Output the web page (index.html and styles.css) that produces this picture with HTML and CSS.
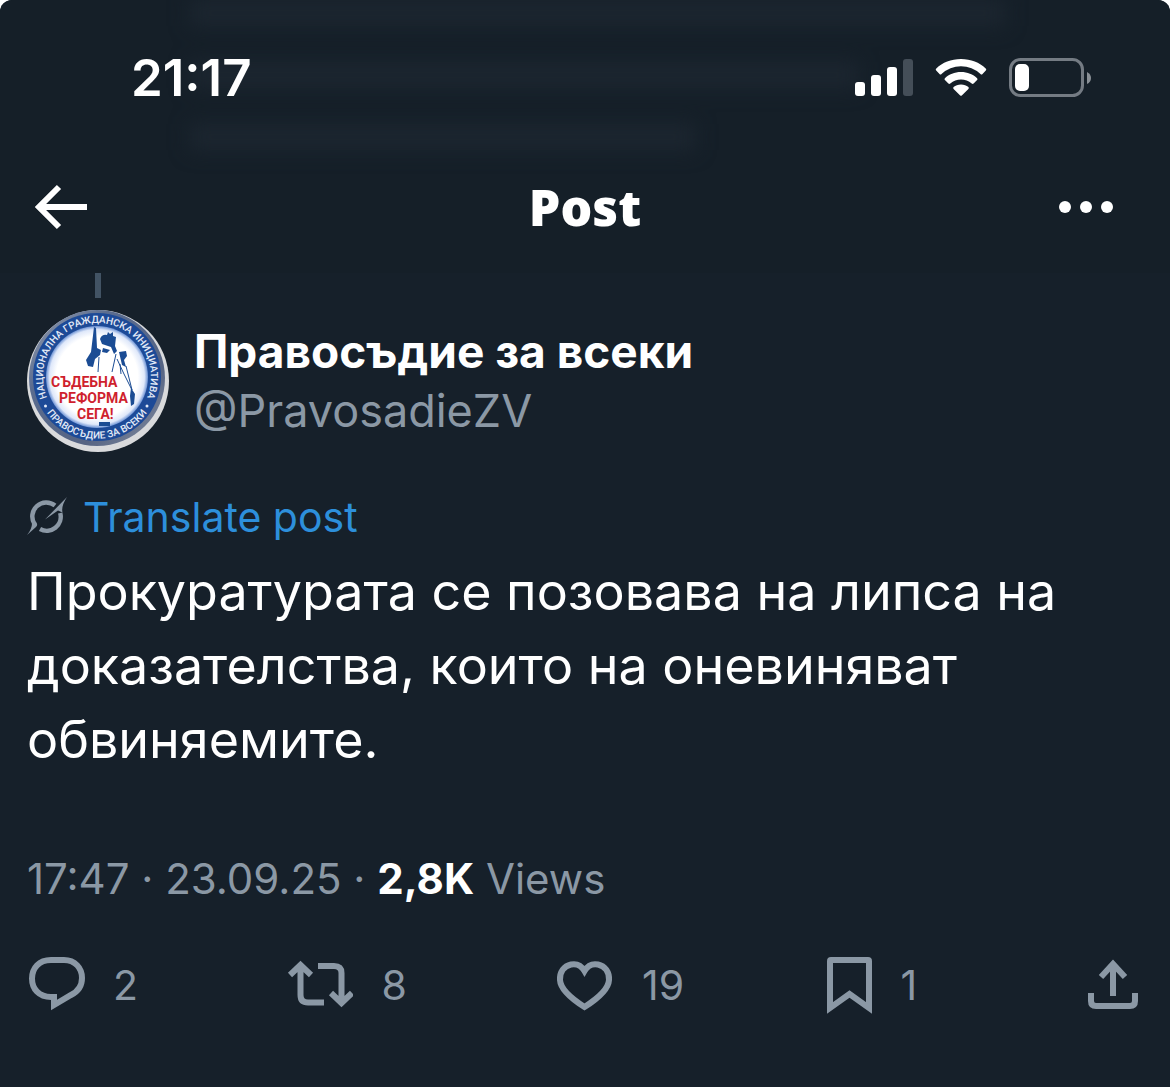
FILE: index.html
```
<!DOCTYPE html>
<html lang="bg">
<head>
    <meta charset="UTF-8">
    <meta name="viewport" content="width=device-width, initial-scale=1.0">
    <title>Post</title>
    <link rel="stylesheet" href="styles.css">
</head>
<body>
    <div class="screen">
        <header class="header">
            <!-- post scrolled under the translucent header -->
            <div class="blurred" aria-hidden="true">
                <div class="blurred-line"></div>
                <div class="blurred-line medium"></div>
                <div class="blurred-line short"></div>
            </div>

            <div class="status-bar">
                <time class="clock">21:17</time>
                <div class="status-icons">
                    <svg width="58" height="38" viewBox="0 0 58 38" fill="#fff" role="img" aria-label="Signal">
                        <rect x="0" y="23" width="10" height="14" rx="3"/>
                        <rect x="16" y="16" width="10" height="21" rx="3"/>
                        <rect x="32" y="8" width="10" height="29" rx="3"/>
                        <rect x="48" y="0" width="10" height="37" rx="3" fill="#444e58"/>
                    </svg>
                    <svg width="52" height="38" viewBox="0 0 52 38" fill="#fff" role="img" aria-label="Wi-Fi">
                        <path d="M26 0C16 0 7.500 3.500 1.300 9.500Q.3 10.500 1.200 11.500L4.500 15Q5.500 16 6.500 15A28.500 28.500 0 0 1 45.500 15Q46.500 16 47.500 15L50.800 11.500Q51.700 10.500 50.700 9.500C44.500 3.500 36 0 26 0Z"/>
                        <path d="M26 13C19.500 13 14 15.300 9.900 19.200Q9 20.200 9.900 21.100L13.400 24.500Q14.300 25.300 15.300 24.500A16 16 0 0 1 36.700 24.500Q37.700 25.300 38.600 24.500L42.100 21.100Q43 20.200 42.100 19.200C38 15.300 32.500 13 26 13Z"/>
                        <path d="M26 25.500C23 25.500 20.500 26.500 18.600 28.100Q17.700 29 18.600 29.900L25.200 36.500Q26 37.200 26.800 36.500L33.400 29.900Q34.300 29 33.400 28.100C31.500 26.500 29 25.500 26 25.500Z"/>
                    </svg>
                    <svg width="82" height="40" viewBox="0 0 82 40" role="img" aria-label="Battery">
                        <rect x="1.500" y="1.500" width="72" height="36" rx="10" fill="none" stroke="#747b83" stroke-width="3"/>
                        <rect x="6" y="6" width="14" height="27" rx="5" fill="#fff"/>
                        <path d="M78 14Q82 16 82 20T78 26Z" fill="#8a9096"/>
                    </svg>
                </div>
            </div>

            <nav class="nav">
                <button class="icon-button" type="button" aria-label="Back">
                    <svg width="54" height="46" viewBox="0 0 54 46" fill="none" stroke="#fff" stroke-width="6">
                        <path d="M25 3L5 23L25 43M5 23H53"/>
                    </svg>
                </button>
                <h1 class="title">Post</h1>
                <button class="icon-button more" type="button" aria-label="More">
                    <svg width="54" height="12" viewBox="0 0 54 12" fill="#fff">
                        <circle cx="6" cy="6" r="6"/>
                        <circle cx="27" cy="6" r="6"/>
                        <circle cx="48" cy="6" r="6"/>
                    </svg>
                </button>
            </nav>
        </header>

        <main class="post">
            <div class="thread-line"></div>

            <div class="author">
                <svg class="avatar" viewBox="0 0 142 142" role="img" aria-label="Правосъдие за всеки">
                    <defs>
                        <linearGradient id="rim" x1="0" y1="0" x2="1" y2="1">
                            <stop offset="0" stop-color="#9aa3b3"/>
                            <stop offset="0.3" stop-color="#5a6c8f"/>
                            <stop offset="0.7" stop-color="#566483"/>
                            <stop offset="1" stop-color="#8791a3"/>
                        </linearGradient>
                        <radialGradient id="face">
                            <stop offset="0.8" stop-color="#fff"/>
                            <stop offset="0.93" stop-color="#dfe8fa"/>
                            <stop offset="1" stop-color="#6c92d4"/>
                        </radialGradient>
                        <path id="ringTop" d="M19.500 86A54 54 0 1 1 120.500 86"/>
                        <path id="ringBottom" d="M18 100A61.500 61.500 0 0 0 122 100"/>
                    </defs>
                    <circle cx="71" cy="71" r="71" fill="#d9dadc"/>
                    <circle cx="70" cy="68" r="68" fill="url(#rim)"/>
                    <circle cx="70" cy="67" r="64" fill="#1d4a97"/>
                    <circle cx="70" cy="67" r="51" fill="url(#face)"/>
                    <!-- Themis -->
                    <g fill="#1b4c94">
                        <path d="M67 17L69 18L70 38L74 40L73 45L68 49L66 57L61 56L59 50L64 42Z"/>
                        <path d="M73 29Q75 24 80 25L81 22L83 24L86 22L86 26L89 27L88 36L90 41L87 44L84 37L75 34Z"/>
                        <path d="M76 38L83 40L80 43L75 42Z"/>
                        <path d="M92 42L99 41L100 46L97 50L99 57L95 55Z"/>
                        <path d="M104 78L108 84L107 94L104 96L103 86Z"/>
                        <path d="M72 112L83 112L83 116L72 116Z"/>
                    </g>
                    <g fill="none" stroke="#1b4c94" stroke-width="1">
                        <path d="M72 47L71 62M89 44L85 62M90 49L97 64L105 80M93 54L94 64M99 56L105 80"/>
                    </g>
                    <g class="avatar-slogan">
                        <text x="24" y="77">СЪДЕБНА</text>
                        <text x="32" y="93">РЕФОРМА</text>
                        <text x="50" y="109">СЕГА!</text>
                    </g>
                    <g class="avatar-ring">
                        <text><textPath href="#ringTop" startOffset="50%">НАЦИОНАЛНА ГРАЖДАНСКА ИНИЦИАТИВА</textPath></text>
                        <text><textPath href="#ringBottom" startOffset="50%">ПРАВОСЪДИЕ ЗА ВСЕКИ</textPath></text>
                        <circle cx="18.500" cy="96" r="1.500"/>
                        <circle cx="120" cy="96" r="1.500"/>
                    </g>
                </svg>
                <div class="author-names">
                    <div class="name">Правосъдие за всеки</div>
                    <div class="handle">@PravosadieZV</div>
                </div>
            </div>

            <a class="translate" href="#">
                <svg width="42" height="42" viewBox="0 0 42 42" fill="#8b98a5">
                    <path d="M7.500 28A14 14 0 0 1 28 9.500M33.200 17A14 14 0 0 1 13 33" fill="none" stroke="#8b98a5" stroke-width="4.500"/>
                    <path d="M40 1L18 23.500L31 14.500L35.500 16.500Q34 10 40 1ZM29 11L40 1Z"/>
                    <path d="M0 39Q5 33 5 27.500L9.500 26.500Q11 29 9 31Z"/>
                </svg>
                Translate post
            </a>

            <p class="post-text">Прокуратурата се позовава на липса на доказателства, които на оневиняват обвиняемите.</p>

            <div class="meta">17:47 · 23.09.25 · <strong>2,8K</strong> Views</div>

            <div class="actions">
                <button class="action" type="button" aria-label="Reply">
                    <svg width="58" height="60" viewBox="0 0 58 60">
                        <path d="M24 5H37C48 5 55 13 55 23C55 32 50 37 44 40L27 50V42H24C12 42 5 34 5 23.500C5 13 12 5 24 5Z"/>
                    </svg>
                    <span>2</span>
                </button>
                <button class="action" type="button" aria-label="Repost">
                    <svg width="66" height="60" viewBox="0 0 66 60">
                        <path d="M3 20L13.500 10L24 20M13.500 11V40Q13.500 47.500 21 47.500H37M31 11H47Q54.500 11 54.500 18V47M44 38L54.500 48L65 38"/>
                    </svg>
                    <span>8</span>
                </button>
                <button class="action" type="button" aria-label="Like">
                    <svg width="58" height="60" viewBox="0 0 58 60">
                        <path d="M28.500 16C25 10 20 8.500 15 9.500C8 11 3.500 17 4 25C4.500 35 16 44 28.500 52C41 44 52.500 35 53 25C53.500 17 49 11 42 9.500C37 8.500 32 10 28.500 16Z"/>
                    </svg>
                    <span>19</span>
                </button>
                <button class="action" type="button" aria-label="Bookmark">
                    <svg width="46" height="60" viewBox="0 0 46 60">
                        <path d="M3 6Q3 5 4 5H41Q42 5 42 6V53L22.500 39L3 53Z"/>
                    </svg>
                    <span>1</span>
                </button>
                <button class="action" type="button" aria-label="Share">
                    <svg width="50" height="60" viewBox="0 0 50 60">
                        <path d="M13 22L25 9L37 22M25 10V41M3 38V46Q3 51 8 51H42Q47 51 47 46V38"/>
                    </svg>
                </button>
            </div>
        </main>
    </div>
</body>
</html>
```

FILE: styles.css
```
body {
    margin: 0;
    background-color: #fff;
    font-family: Inter, "Liberation Sans", sans-serif;
    color: #fff;
}

button {
    padding: 0;
    border: none;
    background: none;
    color: inherit;
    font-family: inherit;
    cursor: pointer;
}

svg {
    display: block;
    flex-shrink: 0;
}

.screen {
    min-height: 100vh;
    background-color: #16202a;
    border-radius: 12px 12px 0 0;
    overflow: hidden;
}

/* Header */
.header {
    position: relative;
    background-color: #151f28;
}

.blurred {
    position: absolute;
    top: 0;
    left: 190px;
    right: 165px;
    display: flex;
    flex-direction: column;
    gap: 36px;
    filter: blur(10px);
}

.blurred-line {
    height: 26px;
    background-color: #1c2630;
}

.blurred-line.medium {
    width: 82%;
}

.blurred-line.short {
    width: 62%;
}

.status-bar {
    position: relative;
    display: flex;
    justify-content: space-between;
    align-items: center;
    padding: 48px 79px 0 131px;
}

.clock {
    font-size: 51px;
    line-height: 60px;
    font-weight: 600;
}

.status-icons {
    display: flex;
    align-items: center;
    gap: 22px;
}

.nav {
    position: relative;
    display: grid;
    grid-template-columns: 1fr auto 1fr;
    align-items: center;
    padding: 67px 57px 34px 34px;
}

.icon-button {
    justify-self: start;
}

.icon-button.more {
    justify-self: end;
}

.title {
    margin: 0;
    padding-left: 23px;
    font-family: "Noto Sans", sans-serif;
    font-size: 50px;
    line-height: 64px;
    font-weight: 900;
}

/* Post */
.post {
    padding: 0 32px 0 27px;
}

.thread-line {
    width: 6px;
    height: 25px;
    margin: 0 0 12px 68px;
    background-color: #425364;
}

.author {
    display: flex;
    align-items: center;
    gap: 25px;
}

.avatar {
    width: 142px;
    height: 142px;
}

.avatar-slogan {
    fill: #cf1f2e;
    font-family: Roboto, sans-serif;
    font-size: 14px;
    font-weight: 700;
}

.avatar-ring {
    fill: #e4ebf7;
    font-family: Roboto, sans-serif;
    font-size: 10px;
    font-weight: 500;
    text-anchor: middle;
}

.name,
.handle {
    line-height: 59px;
}

.name {
    font-size: 46px;
    font-weight: 700;
}

.handle {
    color: #8b98a5;
    font-size: 45px;
}

.translate {
    display: flex;
    align-items: center;
    gap: 14px;
    margin-top: 39px;
    color: #2d8fdb;
    font-size: 41px;
    line-height: 52px;
    text-decoration: none;
}

.post-text {
    margin: 12px 0 0;
    font-size: 52px;
    line-height: 74px;
}

.meta {
    margin-top: 72px;
    color: #8b98a5;
    font-size: 42px;
    line-height: 60px;
}

.meta strong {
    color: #fff;
}

.actions {
    display: grid;
    grid-template-columns: 260fr 268fr 270fr 261fr auto;
    margin-top: 46px;
}

.action {
    display: flex;
    align-items: center;
    gap: 28px;
    color: #8b98a5;
    font-size: 41px;
    line-height: 60px;
}

.action svg {
    fill: none;
    stroke: #8b98a5;
    stroke-width: 6;
}
```
